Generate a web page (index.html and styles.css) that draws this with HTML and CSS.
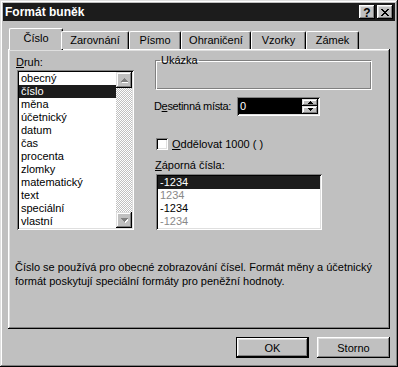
FILE: index.html
```html
<!DOCTYPE html>
<html lang="cs">
<head>
<meta charset="utf-8">
<title>Formát buněk</title>
<link rel="stylesheet" href="styles.css">
</head>
<body>
<div class="window">
  <div class="titlebar">
    <span class="title">Formát buněk</span>
    <div class="tbtns">
      <span class="tbtn help">?</span>
      <span class="tbtn close"><svg width="8" height="7" viewBox="0 0 8 7"><path d="M0 0h2v1h-2zM6 0h2v1h-2zM1 1h2v1h-2zM5 1h2v1h-2zM2 2h4v1h-4zM3 3h2v1h-2zM2 4h4v1h-4zM1 5h2v1h-2zM5 5h2v1h-2zM0 6h2v1h-2zM6 6h2v1h-2z" fill="#000"/></svg></span>
    </div>
  </div>

  <div class="tabs">
    <div class="tab sel w1">Číslo</div>
    <div class="tab w2">Zarovnání</div>
    <div class="tab w3">Písmo</div>
    <div class="tab w4">Ohraničení</div>
    <div class="tab w5">Vzorky</div>
    <div class="tab w6">Zámek</div>
  </div>

  <div class="panel">
    <div class="cols">
      <div class="leftcol">
        <div class="label"><u>D</u>ruh:</div>
        <div class="listbox druh">
          <div class="items">
            <div class="item">obecný</div>
            <div class="item selitem">číslo</div>
            <div class="item">měna</div>
            <div class="item">účetnický</div>
            <div class="item">datum</div>
            <div class="item">čas</div>
            <div class="item">procenta</div>
            <div class="item">zlomky</div>
            <div class="item">matematický</div>
            <div class="item">text</div>
            <div class="item">speciální</div>
            <div class="item">vlastní</div>
          </div>
          <div class="scrollbar">
            <div class="sbtn"><svg width="7" height="5" viewBox="0 0 7 5"><path d="M1 4h7v1h-7zM2 3h5v1h-5zM3 2h3v1h-3zM4 1h1v1h-1z" fill="#fff"/><path d="M0 4h7v-1h-7zM1 3h5v-1h-5zM2 2h3v-1h-3zM3 1h1v-1h-1z" fill="#808080"/></svg></div>
            <div class="strack"></div>
            <div class="sbtn"><svg width="7" height="5" viewBox="0 0 7 5"><path d="M1 1h7v1h-7zM2 2h5v1h-5zM3 3h3v1h-3zM4 4h1v1h-1z" fill="#fff"/><path d="M0 0h7v1h-7zM1 1h5v1h-5zM2 2h3v1h-3zM3 3h1v1h-1z" fill="#808080"/></svg></div>
          </div>
        </div>
      </div>

      <div class="rightcol">
        <fieldset class="group">
          <legend>Ukázka</legend>
        </fieldset>

        <div class="row decimals">
          <span class="rowlabel">D<u>e</u>setinná místa:</span>
          <div class="spinner">
            <div class="spinval"><span class="caret">0</span></div>
            <div class="spinbtns">
              <div class="spb"><svg width="5" height="3" viewBox="0 0 5 3"><path d="M2 0h1v1h-1zM1 1h3v1h-3zM0 2h5v1h-5z" fill="#000"/></svg></div>
              <div class="spb"><svg width="5" height="3" viewBox="0 0 5 3"><path d="M0 0h5v1h-5zM1 1h3v1h-3zM2 2h1v1h-1z" fill="#000"/></svg></div>
            </div>
          </div>
        </div>

        <div class="row check">
          <span class="checkbox"></span>
          <span><u>O</u>ddělovat 1000 ( )</span>
        </div>

        <div class="label neglabel"><u>Z</u>áporná čísla:</div>
        <div class="listbox neg">
          <div class="item selitem">-1234</div>
          <div class="item red">1234</div>
          <div class="item">-1234</div>
          <div class="item red">-1234</div>
        </div>
      </div>
    </div>

    <p class="desc">Číslo se používá pro obecné zobrazování čísel. Formát měny a účetnický formát poskytují speciální formáty pro peněžní hodnoty.</p>
  </div>

  <div class="footer">
    <div class="btn default"><span>OK</span></div>
    <div class="btn">Storno</div>
  </div>
</div>
</body>
</html>
```

FILE: styles.css
```css
* { box-sizing: border-box; }
html, body { margin: 0; padding: 0; background: #c0c0c0; }
body {
  font-family: "Liberation Sans", Arial, sans-serif;
  font-size: 11px;
  color: #000;
}
u { text-decoration: underline; text-underline-offset: 1px; }

.window {
  width: 398px;
  height: 367px;
  padding: 3px;
  background: #c0c0c0;
  display: flex;
  flex-direction: column;
  box-shadow: inset -1px -1px #000, inset 1px 1px #dfdfdf, inset -2px -2px #808080, inset 2px 2px #fff;
}

.titlebar {
  height: 18px;
  background: #1c1c1c;
  display: flex;
  align-items: center;
  justify-content: space-between;
  padding: 0 2px 0 2px;
}
.title {
  color: #fff;
  font-weight: bold;
  font-size: 12px;
}
.tbtns { display: flex; gap: 1px; }
.tbtn {
  width: 16px;
  height: 14px;
  background: #c0c0c0;
  display: flex;
  align-items: center;
  justify-content: center;
  box-shadow: inset -1px -1px #000, inset 1px 1px #fff, inset -2px -2px #808080, inset 2px 2px #dfdfdf;
  font-weight: bold;
  font-size: 12px;
  line-height: 1;
}
.help { margin-right: 1px; padding-top: 1px; }

.tabs {
  display: flex;
  align-items: flex-end;
  margin: 7px 0 0 5px;
  padding-left: 3px;
  height: 21px;
  position: relative;
  z-index: 1;
}
.tab {
  height: 18px;
  background: #c0c0c0;
  border-top: 1px solid #fff;
  border-left: 1px solid #fff;
  border-right: 1px solid #000;
  border-radius: 2px 2px 0 0;
  box-shadow: inset -1px 0 #808080;
  display: flex;
  align-items: center;
  justify-content: center;
  padding-bottom: 1px;
}
.tab.sel {
  height: 22px;
  margin: 0 -2px -1px -2px;
  padding-bottom: 3px;
}
.w1 { width: 54px; }
.w2 { width: 68px; }
.w3 { width: 52px; }
.w4 { width: 70px; }
.w5 { width: 55px; }
.w6 { width: 53px; }

.panel {
  margin: 0 5px 0 5px;
  height: 280px;
  background: #c0c0c0;
  box-shadow: inset -1px -1px #000, inset 1px 1px #fff, inset -2px -2px #808080, inset 2px 2px #dfdfdf;
  padding: 6px 0 0 8px;
}

.cols { display: flex; }
.leftcol { width: 118px; }
.label { height: 14px; line-height: 14px; }

.listbox {
  background: #fff;
  box-shadow: inset 1px 1px #808080, inset -1px -1px #fff, inset 2px 2px #000, inset -2px -2px #dfdfdf;
  padding: 2px;
}
.druh {
  margin-top: 1px;
  margin-left: 1px;
  width: 117px;
  height: 160px;
  display: flex;
}
.items { flex: 1; }
.item {
  height: 13px;
  line-height: 13px;
  padding-left: 2px;
}
.selitem { background: #1c1c1c; color: #fff; }
.red { color: #888; }

.scrollbar {
  width: 16px;
  display: flex;
  flex-direction: column;
}
.sbtn {
  width: 16px;
  height: 16px;
  background: #c0c0c0;
  box-shadow: inset -1px -1px #000, inset 1px 1px #dfdfdf, inset -2px -2px #808080, inset 2px 2px #fff;
  display: flex;
  align-items: center;
  justify-content: center;
}
.strack {
  flex: 1;
  background-color: #fff;
  background-image: conic-gradient(#c0c0c0 25%, #fff 0 50%, #c0c0c0 0 75%, #fff 0);
  background-size: 2px 2px;
}

.rightcol {
  margin-left: 21px;
  width: 218px;
}
.group {
  margin: 0;
  padding: 0;
  height: 35px;
  width: 217px;
  border-top: 1px solid #808080;
  border-left: 1px solid #808080;
  border-right: 1px solid #fff;
  border-bottom: 1px solid #fff;
  box-shadow: inset 1px 1px #fff, inset -1px -1px #808080;
}
.group legend {
  padding: 0 1px;
  margin-left: 4px;
  line-height: 11px;
}

.row { display: flex; align-items: center; }
.decimals { margin-top: 7px; height: 18px; }
.rowlabel { margin-left: -1px; width: 83px; letter-spacing: -0.35px; }
.spinner {
  width: 83px;
  height: 19px;
  display: flex;
  background: #000;
  box-shadow: inset 1px 1px #808080, inset -1px -1px #fff, inset 2px 2px #000, inset -2px -2px #dfdfdf;
  padding: 2px;
}
.spinval {
  flex: 1;
  color: #fff;
  padding-left: 1px;
  line-height: 15px;
}
.spinbtns { width: 16px; display: flex; flex-direction: column; }
.spb {
  flex: 1;
  background: #c0c0c0;
  box-shadow: inset -1px -1px #000, inset 1px 1px #dfdfdf, inset -2px -2px #808080, inset 2px 2px #fff;
  display: flex;
  align-items: center;
  justify-content: center;
}

.check { margin-top: 22px; height: 13px; gap: 4px; margin-left: 1px; }
.checkbox {
  width: 12px;
  height: 12px;
  background: #fff;
  box-shadow: inset 1px 1px #808080, inset -1px -1px #fff, inset 2px 2px #000, inset -2px -2px #dfdfdf;
}
.neglabel { margin-top: 8px; }
.neg {
  margin-top: 2px;
  margin-left: 1px;
  width: 166px;
  height: 56px;
}

.desc {
  margin: 30px 0 0 -1px;
  width: 360px;
  line-height: 14px;
}

.footer {
  display: flex;
  justify-content: flex-end;
  gap: 8px;
  margin-top: 8px;
  padding-right: 5px;
}
.btn {
  width: 73px;
  height: 21px;
  display: flex;
  align-items: center;
  justify-content: center;
  background: #c0c0c0;
  box-shadow: inset -1px -1px #000, inset 1px 1px #fff, inset -2px -2px #808080, inset 2px 2px #dfdfdf;
}
.btn.default {
  box-shadow: inset 0 0 0 1px #000, inset -2px -2px #000, inset 2px 2px #fff, inset -3px -3px #808080, inset 3px 3px #dfdfdf;
}
```
